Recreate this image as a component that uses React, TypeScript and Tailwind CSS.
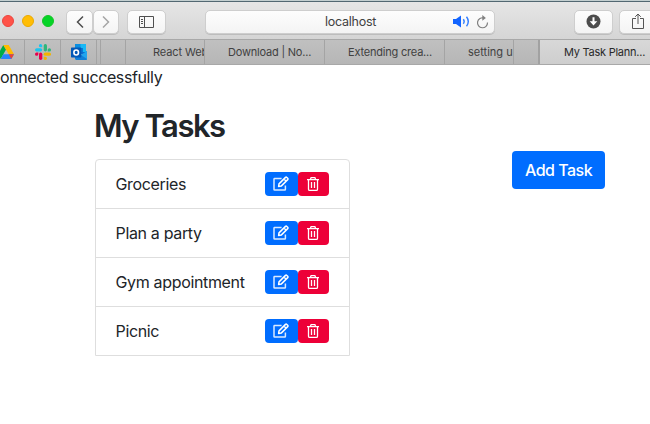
import React from "react";

const tasks = ["Groceries", "Plan a party", "Gym appointment", "Picnic"];

function EditIcon() {
  return (
    <svg className="mr-px" width="16" height="16" viewBox="0 0 16 16" fill="none" stroke="white" strokeWidth="1.5" strokeLinejoin="round">
      <path d="M8.6 2.6H1.6a.6.6 0 0 0-.6.6v10.2c0 .4.2.6.6.6h10.2c.4 0 .6-.2.6-.6V9.4" strokeOpacity=".85" />
      <path d="m6 7.9 6.5-6.5a.9.9 0 0 1 1.3 0l.9.9a.9.9 0 0 1 0 1.3l-6.5 6.5-2.6.4zM11 3l2.2 2.2" />
    </svg>
  );
}

function TrashIcon() {
  return (
    <svg className="mr-px" width="14" height="16" viewBox="0 0 14 16" fill="none" stroke="white" strokeWidth="1.3">
      <path d="M1 3.7h12M4.3 3.5l.8-1.8h3.8l.8 1.8M2.5 3.8v9.4c0 .8.4 1.2 1.2 1.2h6.6c.8 0 1.2-.4 1.2-1.2V3.8M5.5 6v6M8.5 6v6" />
    </svg>
  );
}

function Drive() {
  return (
    <svg width="16" height="14" viewBox="0 0 16 14">
      <path d="M5.3 0 8 4.6 2.7 14 0 9.3z" fill="#00ac47" />
      <path d="M5.3 0h5.4L16 9.3h-5.3z" fill="#ffba00" />
      <path d="M5.3 9.3H16L13.3 14H2.7z" fill="#2684fc" />
      <path d="M10.7 9.3H16L13.3 14z" fill="#ea4335" />
    </svg>
  );
}

function Slack() {
  return (
    <svg width="16" height="16" viewBox="0 0 16 16">
      <g fill="#1cc4ee"><rect x="0" y="4.2" width="7.2" height="3.3" rx="1.65" /><path d="M7.2 3.3H5.6A1.65 1.65 0 1 1 7.2 1.6z" /></g>
      <g fill="#2eb67d"><rect x="8.7" y="0" width="3.3" height="7.5" rx="1.65" /><path d="M12.7 7.5V5.8a1.65 1.65 0 1 1 1.6 1.7z" /></g>
      <g fill="#f2b400"><rect x="8.7" y="8.5" width="7.3" height="3.3" rx="1.65" /><path d="M8.7 12.7h1.6a1.65 1.65 0 1 1-1.6 1.6z" /></g>
      <g fill="#e8004e"><rect x="4" y="8.5" width="3.3" height="7.5" rx="1.65" /><path d="M3.3 8.5v1.7a1.65 1.65 0 1 1-1.6-1.7z" /></g>
    </svg>
  );
}

function Outlook() {
  return (
    <svg width="16" height="16" viewBox="0 0 16 16">
      <path d="M4 0h11v10H4z" fill="#0a6ccf" />
      <path d="M4 0h6v4H4z" fill="#0a8ee0" />
      <path d="M9.5 0H15v8H9.5z" fill="#19b8f5" />
      <path d="M9.5 4H12v4H9.5z" fill="#0a78d8" />
      <path d="M4 15V9l6 2 6-4v8.2q0 .8-.8.8H5z" fill="#127fd8" />
      <path d="m16 7-6 4 6 4z" fill="#22a5ee" />
      <rect y="3.5" width="10.3" height="10" rx=".7" fill="#0358b7" />
      <ellipse cx="5.2" cy="8.5" rx="2.3" ry="2.5" fill="none" stroke="white" strokeWidth="1.6" />
    </svg>
  );
}

const btn = "flex h-6 shrink-0 items-center justify-center rounded-[5px] border border-[#cecece] bg-gradient-to-b from-[#fdfdfd] to-[#f4f4f4] shadow-[0_1px_0_#bdbdbd]";

export default function App() {
  return (
    <div className="h-[424px] w-[650px] overflow-hidden bg-white font-['Inter','Liberation_Sans',sans-serif] text-[#212529]">
      <div className="h-px bg-[#c3cfd0]" />
      <header className="flex h-[38px] w-[660px] items-center border-t border-[#526872] bg-gradient-to-b from-[#e6e6e6] to-[#d5d5d5] pt-[2px]">
        <div className="mb-px ml-0.5 flex w-16 gap-2">
          <i className="size-3 rounded-full border border-[#ed453e] bg-[#ff5349]" />
          <i className="size-3 rounded-full border border-[#eba900] bg-[#ffbd05]" />
          <i className="size-3 rounded-full border border-[#16c526] bg-[#05d427]" />
        </div>
        <div className={`${btn} w-[27px]`}>
          <svg width="8" height="14" viewBox="0 0 8 14" fill="none" stroke="#4c4c4c" strokeWidth="1.5"><path d="M7 1.5 1.5 7 7 12.5" /></svg>
        </div>
        <div className={`${btn} w-[26px]`}>
          <svg width="8" height="14" viewBox="0 0 8 14" fill="none" stroke="#a5a5a5" strokeWidth="1.5"><path d="M1 1.5 6.5 7 1 12.5" /></svg>
        </div>
        <div className={`${btn} ml-2 w-[39px]`}>
          <svg width="15" height="12" viewBox="0 0 15 12" fill="none" stroke="#505050"><path d="M.5.5h14v11H.5zM5.5.5v11M2 3.5h2M2 5.5h2M2 7.5h2" /></svg>
        </div>
        <div className={`${btn} ml-[39px] w-[290px] justify-between pr-[5px]`}>
          <span className="w-[289px] pt-px text-center text-[12.5px] tracking-[-0.25px] text-[#414141] [text-indent:42px]">localhost</span>
          <div className="flex gap-1.5">
            <svg width="17" height="13" viewBox="0 0 17 13"><path d="M0 4h3l5-3.5v12L3 9H0z" fill="#1264ff" /><path d="M10.3 4.3q1.7 2.2 0 4.4M13.5 1.8q3.6 4.7 0 9.4" fill="none" stroke="#2f7dff" strokeWidth="1.4" /></svg>
            <svg width="13" height="14" viewBox="0 0 13 14" fill="none" stroke="#808080" strokeWidth="1.2"><path d="M11.5 7.5A5 5 0 1 1 8 3H6.3" /><path d="m6.3 0 3.6 2.9-3.6 2.9z" fill="#808080" stroke="none" /></svg>
          </div>
        </div>
        <div className={`${btn} ml-[79px] w-[39px]`}>
          <svg width="15" height="15" viewBox="0 0 15 15"><circle cx="7.5" cy="7.5" r="7" fill="#4c4c4c" /><path d="M6.5 3.3h2v4h2.8l-3.8 4.2-3.8-4.2h2.8z" fill="white" /></svg>
        </div>
        <div className={`${btn} ml-1.5 w-[39px]`}>
          <svg className="mb-px mr-px" width="12" height="16" viewBox="0 0 12 16" fill="none" stroke="#555"><path d="M4 5.5H.5v10h11v-10H8M6 11V1M3.2 3.8 6 1l2.8 2.8" /></svg>
        </div>
      </header>

      <nav className="flex h-[26px] w-[660px] border-y border-[#a8a8a8] bg-gradient-to-b from-[#c0c0c0] to-[#b6b6b6] text-[11px] leading-[25px] text-[#414141]">
        <div className="flex w-[25px] items-center overflow-hidden border-r border-[#a4a4a4]"><div className="-ml-0.5"><Drive /></div></div>
        <div className="flex w-9 items-center justify-center border-r border-[#a4a4a4]"><Slack /></div>
        <div className="flex w-9 items-center justify-center border-r border-[#a4a4a4]"><Outlook /></div>
        <div className="w-1 border-r border-[#a4a4a4]" />
        <div className="w-[25px] border-r border-[#a4a4a4]" />
        <div className="w-[79px] overflow-hidden whitespace-nowrap border-r border-[#a4a4a4] pl-[27px] tracking-[-0.1px]">React Web</div>
        <div className="w-[120px] whitespace-nowrap border-r border-[#a4a4a4] pl-[23px] tracking-[-0.2px]">Download | No...</div>
        <div className="w-[120px] whitespace-nowrap border-r border-[#a4a4a4] pl-[23px] tracking-[-0.2px]">Extending crea...</div>
        <div className="w-[69px] whitespace-nowrap border-r border-[#a4a4a4] pl-[23px]">setting u</div>
        <div className="w-[26px] border-r-2 border-[#a1a1a1]" />
        <div className="w-[120px] whitespace-nowrap bg-gradient-to-b from-[#d8d8d8] to-[#cecece] pl-6 tracking-[-0.25px] text-[#292929]">My Task Plann...</div>
      </nav>

      <p className="h-6 text-base leading-6 tracking-[-0.38px]">onnected successfully</p>
      <main className="ml-[95px] mt-4 flex items-start">
        <section className="w-[255px]">
          <h1 className="-ml-px pt-px text-[31px] font-[580] leading-[39px] tracking-[-1.5px]">My Tasks</h1>
          <ul className="mt-3.5 overflow-hidden rounded-t border border-[#dedede]">
            {tasks.map((task) => (
              <li key={task} className="flex h-[49px] items-center border-b border-[#dedede] pl-[19.5px] pr-5 last:h-12 last:border-b-0">
                <span className="grow whitespace-nowrap text-base tracking-[-0.34px]">{task}</span>
                <button aria-label="Edit task" className="flex h-6 w-[33px] items-center justify-center rounded bg-[#006dff]"><EditIcon /></button>
                <button aria-label="Delete task" className="flex h-6 w-[31px] items-center justify-center rounded bg-[#ed0038]"><TrashIcon /></button>
              </li>
            ))}
          </ul>
        </section>
        <button className="ml-[162px] mt-[46px] h-[38px] w-[93px] rounded bg-[#006dff] text-base font-[450] tracking-[-0.5px] text-white">Add Task</button>
      </main>
    </div>
  );
}
